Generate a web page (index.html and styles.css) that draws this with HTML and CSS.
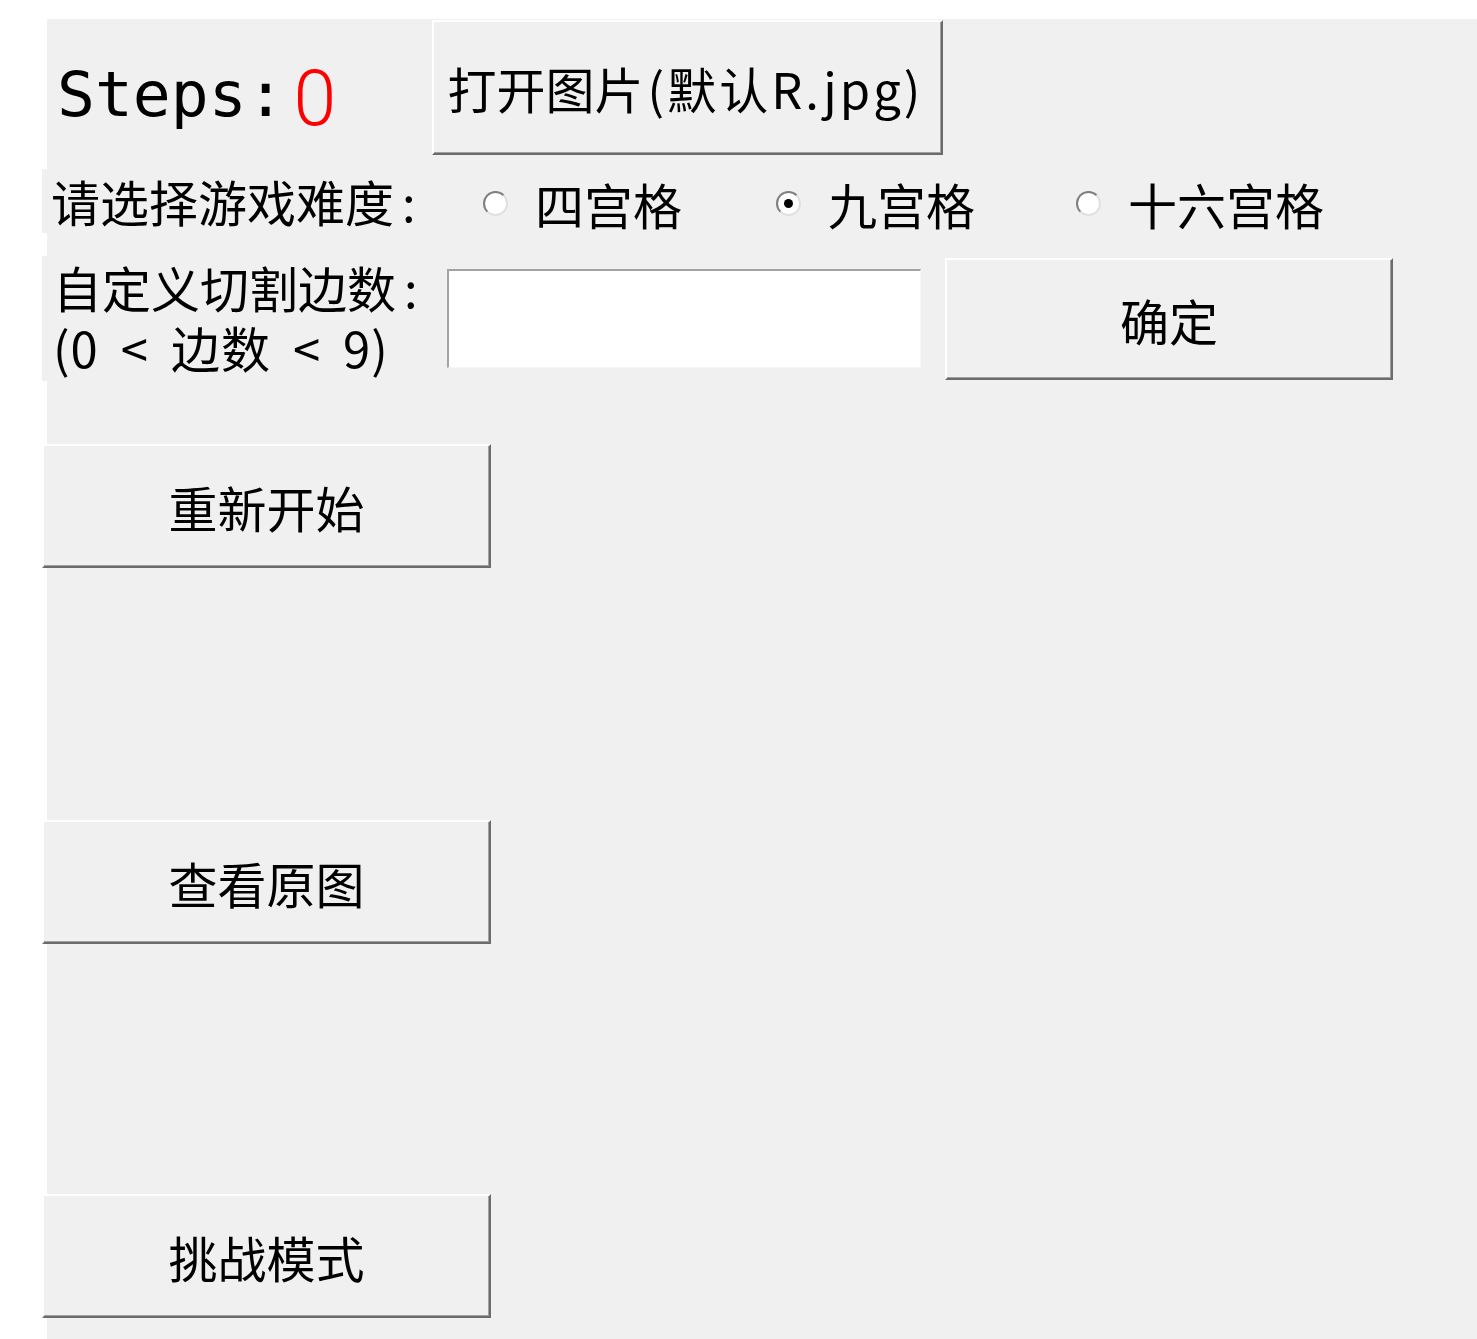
FILE: index.html
```html
<!DOCTYPE html>
<html lang="zh-CN">
<head>
<meta charset="utf-8">
<title>拼图游戏</title>
<link rel="stylesheet" href="styles.css">
</head>
<body>
<div class="window">
  <div class="top-row">
    <div class="steps">Steps:<span class="steps-count">0</span></div>
    <button class="btn btn-open">打开图片<span class="open-hint">(默认R.jpg)</span></button>
  </div>
  <div class="difficulty-row">
    <div class="label difficulty-label">请选择游戏难度<span class="colon">:</span></div>
    <div class="radio-group">
      <label class="radio-item radio-item-1"><span class="radio"></span><span class="radio-text">四宫格</span></label>
      <label class="radio-item radio-item-2"><span class="radio checked"></span><span class="radio-text">九宫格</span></label>
      <label class="radio-item"><span class="radio"></span><span class="radio-text">十六宫格</span></label>
    </div>
  </div>
  <div class="custom-row">
    <div class="label custom-label">
      <div class="custom-line">自定义切割边数<span class="colon">:</span></div>
      <div class="custom-line range">(0 &lt; 边数 &lt; 9)</div>
    </div>
    <div class="textbox"></div>
    <button class="btn btn-ok">确定</button>
  </div>
  <button class="btn btn-big btn-restart">重新开始</button>
  <button class="btn btn-big btn-view">查看原图</button>
  <button class="btn btn-big btn-challenge">挑战模式</button>
</div>
</body>
</html>
```

FILE: styles.css
```css
html, body {
  margin: 0;
  padding: 0;
  background: #ffffff;
}

body {
  font-family: "Noto Sans CJK SC", "Noto Sans", sans-serif;
  color: #000;
}

.window {
  margin: 19px 0 0 47px;
  height: 1320px;
  background: #f0f0f0;
  display: flex;
  flex-direction: column;
  align-items: flex-start;
}

.top-row {
  display: flex;
  align-items: flex-start;
  height: 136px;
}

.steps {
  margin-left: 10px;
  margin-top: 44px;
  width: 375px;
  font-family: "DejaVu Sans Mono", monospace;
  font-size: 63px;
  line-height: 63px;
  white-space: nowrap;
}

.steps-count {
  font-family: Roboto, "Noto Sans", sans-serif;
  font-weight: 300;
  font-size: 77px;
  color: #ff0000;
  margin-left: 9px;
  vertical-align: -9px;
}

.btn {
  box-sizing: border-box;
  background: #f0f0f0;
  border-style: solid;
  border-width: 2px;
  border-color: #ffffff #6b6b6b #6b6b6b #ffffff;
  box-shadow: inset -1px -1px 0 #a0a0a0;
  font-family: "Noto Sans CJK SC", sans-serif;
  font-size: 49px;
  line-height: 1;
  color: #000;
  padding: 0;
  display: flex;
  align-items: center;
  justify-content: center;
  white-space: nowrap;
}

.btn-open {
  margin-top: 1px;
  width: 511px;
  height: 135px;
  padding-right: 4px;
}

.open-hint {
  letter-spacing: 3px;
  margin-left: 4px;
}

.label {
  background: #f0f0f0;
  font-size: 49px;
  white-space: nowrap;
}

.colon {
  margin-left: 8px;
}

.difficulty-row {
  margin-top: 14px;
  margin-left: -5px;
  height: 64px;
  display: flex;
  align-items: flex-start;
}

.difficulty-label {
  box-sizing: border-box;
  width: 441px;
  height: 64px;
  padding-left: 9px;
  line-height: 64px;
}

.radio-group {
  display: flex;
  align-items: center;
  margin-top: 5px;
  height: 59px;
}

.radio-item {
  display: flex;
  align-items: center;
  font-size: 49px;
  line-height: 59px;
}

.radio-item-1 {
  width: 293px;
}

.radio-item-2 {
  width: 300px;
}

.radio {
  position: relative;
  box-sizing: border-box;
  width: 25px;
  height: 25px;
  border-radius: 50%;
  background: #ffffff;
  border: 2px solid;
  border-color: #7e7e7e #e0e0e0 #e0e0e0 #7e7e7e;
  margin-right: 27px;
  flex: none;
}

.radio.checked::after {
  content: "";
  position: absolute;
  left: 6px;
  top: 6px;
  width: 9px;
  height: 9px;
  border-radius: 50%;
  background: #000;
}

.custom-row {
  margin-top: 23px;
  margin-left: -5px;
  display: flex;
  align-items: flex-start;
}

.custom-label {
  box-sizing: border-box;
  width: 405px;
  height: 125px;
  padding-left: 11px;
  padding-top: 1px;
}

.custom-line {
  height: 60px;
  line-height: 60px;
}

.range {
  word-spacing: 10px;
  letter-spacing: 1px;
}

.textbox {
  box-sizing: border-box;
  margin-top: 13px;
  width: 474px;
  height: 99px;
  background: #ffffff;
  border-style: solid;
  border-width: 2px 1px 1px 2px;
  border-color: #a3a3a3 #f6f6f6 #f6f6f6 #a3a3a3;
}

.btn-ok {
  margin-top: 2px;
  margin-left: 24px;
  width: 448px;
  height: 122px;
}

.btn-big {
  margin-left: -5px;
  width: 449px;
  height: 124px;
}

.btn-restart {
  margin-top: 63px;
}

.btn-view {
  margin-top: 252px;
}

.btn-challenge {
  margin-top: 250px;
}
```
